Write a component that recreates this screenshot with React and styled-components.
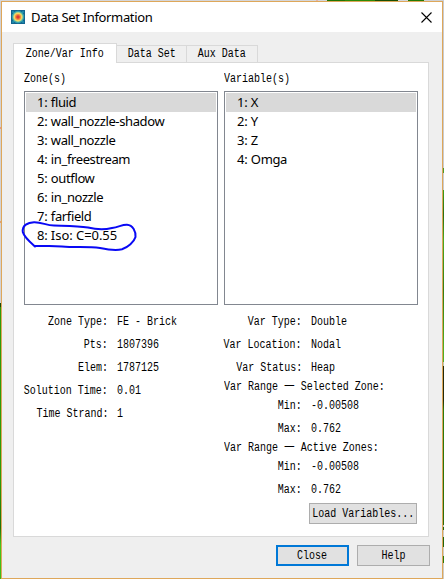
import React from 'react';
import styled, { createGlobalStyle } from 'styled-components';

const Global = createGlobalStyle`
  * { box-sizing: border-box; }
  body { margin: 0; overflow: hidden; }
`;

const Desktop = styled.div`
  width: 444px;
  height: 579px;
  padding: 1px 1px 0 1px;
  background:
    linear-gradient(90deg, #d4d6da 316px, #e6b3a4 316px 318px, #d4d6da 318px 327px, #1f7503 327px 345px, #2b8a07 345px 375px, #174f02 375px 398px, #d4d6da 398px 408px, #217a05 408px 424px, #cfd1d4 424px) 0 0 / 444px 1px no-repeat,
    linear-gradient(180deg, #d2d2d6 127px, #e09a88 127px 129px, #d2d2d6 129px 221px, #e0a070 221px 223px, #d2d2d6 223px 303px, #174a08 303px 307px, #2c9a08 307px 480px, #1d7208 528px, #45c41c 545px, #3dbb14 579px) 0 0 / 1px 579px no-repeat,
    linear-gradient(180deg, #c9cbd0 168px, #4c9a2a 168px 173px, #c9cbd0 173px 190px, #3d9d18 190px, #2a6d10 215px, #4aa820 240px, #347c12 290px, #4fae22 350px, #4fae22 362px, #c0c8b0 362px 366px, #232a08 366px 400px, #2b7a0c 410px, #2c6c0a 525px, #c9c9c4 525px 527px, #22640c 527px 530px, #d0ccc4 530px 537px, #22640c 537px 547px, #d0ccc4 547px 556px, #2b7a0c 556px 563px, #d0ccc4 563px) 443px 0 / 1px 579px no-repeat;
`;

const Window = styled.main`
  display: flex;
  flex-direction: column;
  width: 442px;
  height: 578px;
  border: 1px solid #dea75a;
  background: #efefef;
  color: #000;
`;

const TitleBar = styled.header`
  display: flex;
  align-items: center;
  height: 30px;
  padding: 0 10px 0 9px;
  background: #fff;
`;

const Title = styled.h1`
  flex: 1;
  margin: 0 0 0 6px;
  font: 400 13px/18px "Noto Sans", sans-serif;
  letter-spacing: -0.34px;
`;

const CloseIcon = styled.svg`
  display: block;
  width: 11px;
  height: 11px;
`;

const Tabs = styled.nav`
  display: flex;
  align-items: flex-end;
  height: 30px;
  padding-left: 11px;
`;

const Tab = styled.div`
  display: flex;
  justify-content: center;
  align-items: center;
  position: relative;
  z-index: ${p => (p.$active ? 1 : 0)};
  width: ${p => p.$width}px;
  height: ${p => (p.$active ? 20 : 17)}px;
  margin-bottom: ${p => (p.$active ? -1 : 0)}px;
  border: 1px solid #d9d9d9;
  border-bottom: 0;
  border-left-width: ${p => (p.$active ? 1 : 0)}px;
  background: ${p => (p.$active ? '#fff' : '#efefef')};
`;

const Mono = styled.span`
  display: block;
  white-space: pre;
  font: 12px/14px "Liberation Mono", monospace;
  transform: scaleX(0.8333);
  transform-origin: ${p => p.$origin || 'left'} center;
`;

const WideDash = styled.span`
  font: 14.4px/1px "Noto Sans CJK SC", sans-serif;
`;

const Panel = styled.section`
  display: grid;
  grid-template-columns: 194px 194px;
  column-gap: 6px;
  width: 416px;
  height: 475px;
  margin-left: 11px;
  padding: 9px 0 0 10px;
  border: 1px solid #d9d9d9;
  background: #fff;
`;

const Column = styled.div`
  display: flex;
  flex-direction: column;
`;

const Heading = styled.div`
  height: 19px;
`;

const List = styled.ul`
  height: 214px;
  margin: 0 0 5px;
  padding: 1px;
  border: 1px solid #828790;
  list-style: none;
`;

const Item = styled.li`
  height: 19px;
  padding-left: 11px;
  background: ${p => (p.$selected ? '#d9d9d9' : 'transparent')};
  font: 13px/19px "Noto Sans", sans-serif;
  letter-spacing: -0.15px;
  white-space: pre;
`;

const ItemName = styled.span`
  letter-spacing: ${p => (p.$loose ? '-0.05px' : '-0.38px')};
`;

const Row = styled.div`
  display: grid;
  grid-template-columns: ${p => p.$labelWidth}px 1fr;
  column-gap: 9px;
  align-items: center;
  height: 23px;
`;

const Label = styled.div`
  display: flex;
  justify-content: flex-end;
`;

const RangeTitle = styled.div`
  display: flex;
  align-items: center;
  height: 15px;
`;

const Button = styled.button`
  display: flex;
  align-items: center;
  justify-content: center;
  flex: none;
  width: ${p => p.$width}px;
  height: 21px;
  padding: 0;
  border: ${p => (p.$primary ? '2px solid #0078d7' : '1px solid #adadad')};
  background: #e1e1e1;
  color: #000;
`;

const LoadSlot = styled.div`
  display: flex;
  justify-content: flex-end;
  padding: 2px 1px 0 0;
`;

const Footer = styled.footer`
  display: flex;
  justify-content: flex-end;
  gap: 8px;
  padding: 8px 12px 0 0;
`;

const Annotation = styled.svg`
  position: absolute;
  left: 20px;
  top: 218px;
  width: 120px;
  height: 36px;
  pointer-events: none;
`;

const Logo = () => (
  <svg width="14" height="14" viewBox="0 0 14 14">
    <rect width="14" height="14" fill="#12648f" />
    <path d="M1 1h2v2H1zM11 1h2v2h-2zM1 11h2v2H1zM11 11h2v2h-2z" fill="#1b86a8" />
    <circle cx="7" cy="7" r="6.2" fill="#37a3ad" />
    <circle cx="7" cy="7" r="5" fill="#a5d08c" />
    <circle cx="7" cy="7" r="4.2" fill="#f7d560" />
    <circle cx="7" cy="7" r="3" fill="#f28b3c" />
    <circle cx="7" cy="7" r="1.8" fill="#dc3b35" />
  </svg>
);

const zones = ['fluid', 'wall_nozzle-shadow', 'wall_nozzle', 'in_freestream', 'outflow', 'in_nozzle', 'farfield', 'Iso: C=0.55'];
const variables = ['X', 'Y', 'Z', 'Omga'];
const zoneInfo = [['Zone Type:', 'FE - Brick'], ['Pts:', '1807396'], ['Elem:', '1787125'], ['Solution Time:', '0.01'], ['Time Strand:', '1']];
const varInfo = [['Var Type:', 'Double'], ['Var Location:', 'Nodal'], ['Var Status:', 'Heap']];
const range = [['Min:', '-0.00508'], ['Max:', '0.762']];

const Listing = ({ items }) => (
  <List>
    {items.map((name, i) => (
      <Item key={name} $selected={i === 0}>
        {`${i + 1}: `}<ItemName $loose={name.includes('=')}>{name}</ItemName>
      </Item>
    ))}
  </List>
);

const Rows = ({ data, labelWidth }) => data.map(([label, value]) => (
  <Row key={label} $labelWidth={labelWidth}>
    <Label><Mono $origin="right">{label}</Mono></Label>
    <Mono>{value}</Mono>
  </Row>
));

const Range = ({ name }) => (
  <>
    <RangeTitle><Mono>Var Range <WideDash>—</WideDash> {name}:</Mono></RangeTitle>
    <Rows data={range} labelWidth={78} />
  </>
);

export default function App() {
  return (
    <Desktop>
      <Global />
      <Window>
        <TitleBar>
          <Logo />
          <Title>Data Set Information</Title>
          <CloseIcon viewBox="0 0 11 11">
            <path d="M.5.5l10 10M10.5.5l-10 10" stroke="#000" strokeWidth="1.1" />
          </CloseIcon>
        </TitleBar>
        <Tabs>
          <Tab $active $width={104}><Mono $origin="center">Zone/Var Info</Mono></Tab>
          <Tab $width={70}><Mono $origin="center">Data Set</Mono></Tab>
          <Tab $width={71}><Mono $origin="center">Aux Data</Mono></Tab>
        </Tabs>
        <Panel>
          <Column>
            <Heading><Mono>Zone(s)</Mono></Heading>
            <Listing items={zones} />
            <Rows data={zoneInfo} labelWidth={84} />
          </Column>
          <Column>
            <Heading><Mono>Variable(s)</Mono></Heading>
            <Listing items={variables} />
            <Rows data={varInfo} labelWidth={78} />
            <Range name="Selected Zone" />
            <Range name="Active Zones" />
            <LoadSlot>
              <Button $width={108}><Mono $origin="center">Load Variables...</Mono></Button>
            </LoadSlot>
          </Column>
        </Panel>
        <Footer>
          <Button $primary $width={73}><Mono $origin="center">Close</Mono></Button>
          <Button $width={73}><Mono $origin="center">Help</Mono></Button>
        </Footer>
      </Window>
      <Annotation viewBox="20 218 120 36" fill="none">
        <path d="M35 246.5C31 243 24 237 22.8 232C22 225 28 222.5 34 222.2C42 222 46 225.5 54 225.6C67 226 78 226 88 227.5C96 229.5 104 230 112 228C119 227 122 224.5 127 224.7C133 225 136 232 135.5 237C134 242 128 247 122 249.3C115 251 107 249.5 100 248C88 246.5 75 247.5 62 246.4C51 245.5 42 246.5 34 245.7" stroke="#0909f5" strokeWidth="2" strokeLinecap="round" strokeLinejoin="round" />
      </Annotation>
    </Desktop>
  );
}
